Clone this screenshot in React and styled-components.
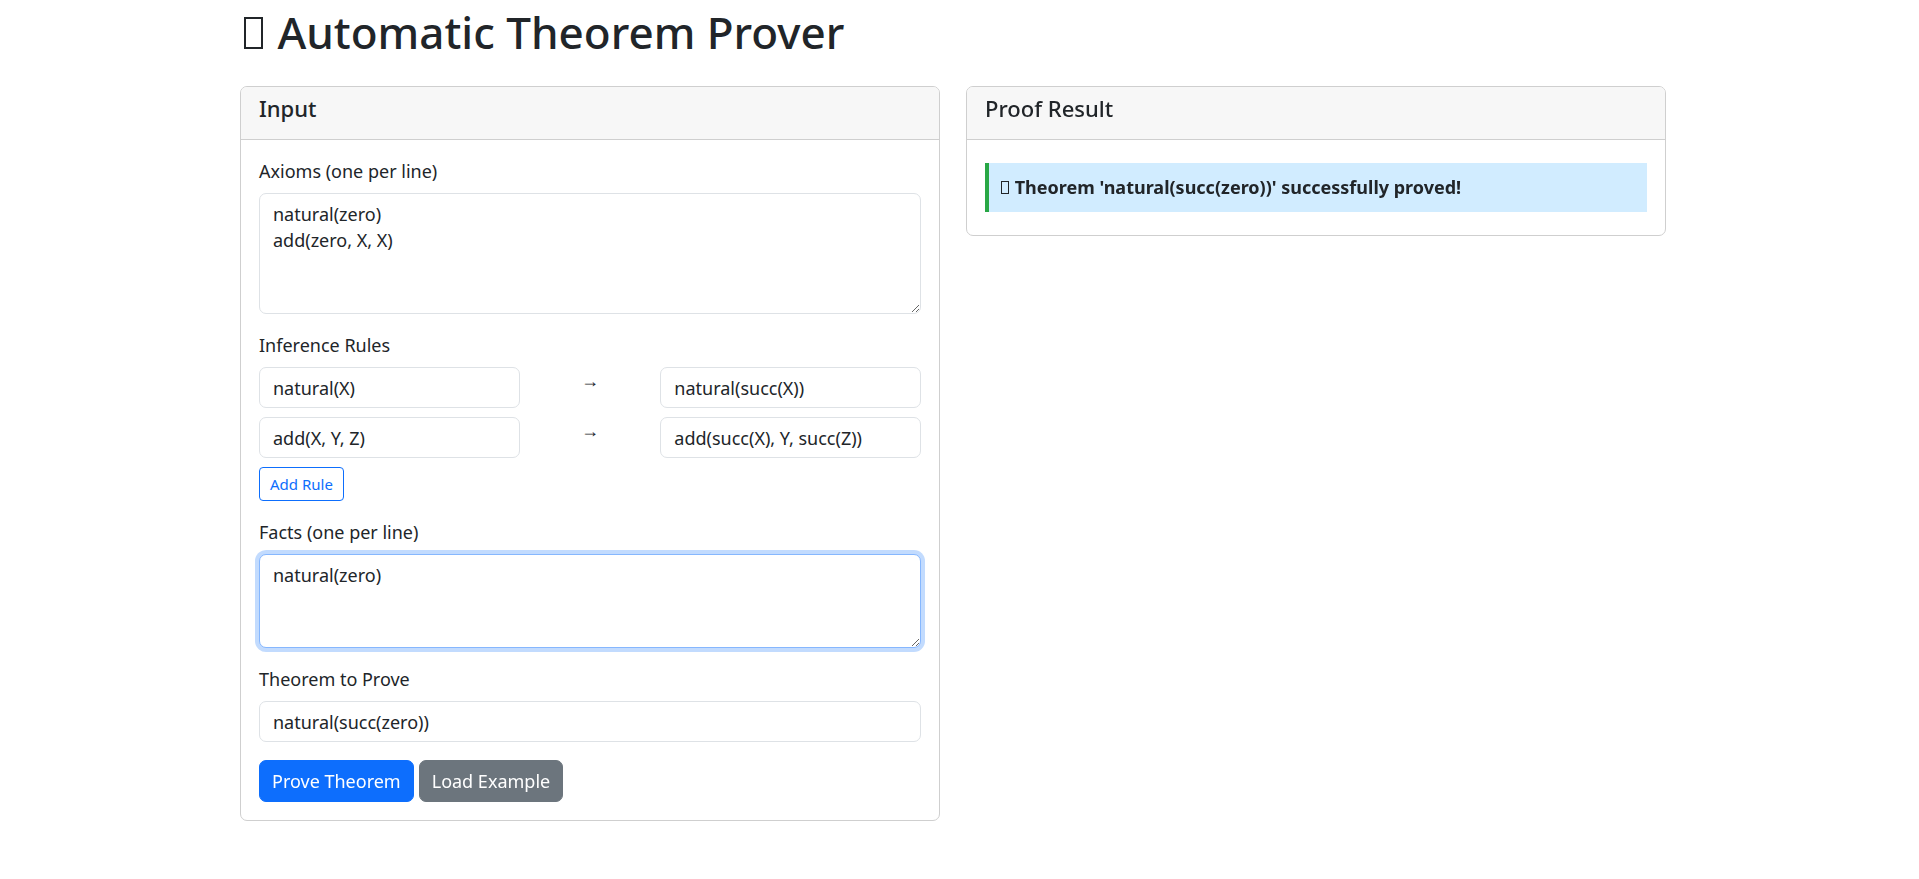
import React, { useEffect, useRef, useState } from "react";
import styled, { createGlobalStyle, css } from "styled-components";

const GlobalStyle = createGlobalStyle`
  *, *::before, *::after { box-sizing: border-box; }
  body {
    margin: 0;
    padding-right: 13px;
    background: #fff;
    color: #212529;
    font-family: "Noto Sans", "Liberation Sans", sans-serif;
    font-size: 18px;
    line-height: 26px;
  }
`;

const Page = styled.main`
  max-width: 1452px;
  margin: 0 auto;
  padding: 6px 13px 52px;
`;

const Title = styled.h1`
  margin: 0 0 27px;
  font-size: 44px;
  font-weight: 500;
  line-height: 53px;
`;

/* Hollow upright box that stands in front of a heading or message. */
const TitleMark = styled.span`
  display: inline-block;
  width: 19px;
  height: 32px;
  margin: 0 3px 0 4px;
  border: 2px solid currentColor;
`;

const ResultMark = styled.span`
  display: inline-block;
  width: 8px;
  height: 13px;
  margin: 0 1px;
  border: 1px solid currentColor;
`;

const Columns = styled.div`
  display: grid;
  grid-template-columns: repeat(2, minmax(0, 1fr));
  gap: 26px;
  align-items: start;

  @media (max-width: 840px) {
    grid-template-columns: minmax(0, 1fr);
  }
`;

const Card = styled.section`
  border: 1px solid #cfcfcf;
  border-radius: 7px;
  background: #fff;
`;

const CardHeader = styled.header`
  padding: 8px 18px 18px;
  border-bottom: 1px solid #cfcfcf;
  border-radius: 6px 6px 0 0;
  background: #f7f7f7;
`;

const CardTitle = styled.h2`
  margin: 0;
  font-size: 22px;
  font-weight: 500;
  line-height: 26px;
`;

const CardBody = styled.div`
  padding: 18px;
`;

const Group = styled.div`
  margin-bottom: 18px;
`;

const labelStyle = css`
  display: block;
  margin-bottom: 9px;
  padding: 0;
`;

const Label = styled.label`
  ${labelStyle}
`;

const RuleSet = styled.fieldset`
  min-width: 0;
  margin: 0 0 18px;
  padding: 0;
  border: 0;
`;

const Legend = styled.legend`
  ${labelStyle}
`;

const fieldStyle = css`
  display: block;
  width: 100%;
  padding: 7px 13px;
  border: 1px solid #dee2e6;
  border-radius: 7px;
  outline: 0;
  background: #fff;
  color: inherit;
  font: inherit;

  &:focus {
    border-color: #86b7fe;
    box-shadow: 0 0 0 4px rgba(13, 110, 253, 0.25);
  }
`;

const Input = styled.input`
  ${fieldStyle}
  height: 41px;
`;

const TextArea = styled.textarea`
  ${fieldStyle}
  height: ${({ $height }) => $height}px;
  resize: vertical;
  caret-color: transparent;
`;

const RuleRow = styled.div`
  display: grid;
  grid-template-columns: repeat(12, minmax(0, 1fr));
  column-gap: 26px;
  margin-bottom: 9px;
`;

const RuleInput = styled(Input)`
  grid-column: span 5;
`;

const Arrow = styled.span`
  grid-column: span 2;
  text-align: center;
`;

const Button = styled.button`
  padding: 7px 12px;
  border: 1px solid ${({ $color }) => $color};
  border-radius: 7px;
  background: ${({ $color }) => $color};
  color: #fff;
  font: inherit;
  cursor: pointer;
`;

const SmallButton = styled.button`
  display: block;
  padding: 4px 10px;
  border: 1px solid #0d6efd;
  border-radius: 4px;
  background: transparent;
  color: #0d6efd;
  font: inherit;
  font-size: 15px;
  line-height: 24px;
  cursor: pointer;
`;

const Actions = styled.div`
  display: flex;
  flex-wrap: wrap;
  gap: 5px;
`;

const Result = styled.p`
  margin: 5px 0;
  padding: 11px 11px 12px;
  border-left: 4px solid #28a745;
  background: #d1ecff;
  font-weight: 700;
`;

const example = {
  axioms: "natural(zero)\nadd(zero, X, X)",
  rules: [
    ["natural(X)", "natural(succ(X))"],
    ["add(X, Y, Z)", "add(succ(X), Y, succ(Z))"],
  ],
  facts: "natural(zero)",
  theorem: "natural(succ(zero))",
};

export default function App() {
  const [form, setForm] = useState(example);
  const factsRef = useRef(null);

  useEffect(() => {
    factsRef.current.focus({ preventScroll: true });
  }, []);

  const update = (key) => (event) => setForm({ ...form, [key]: event.target.value });
  const updateRule = (row, side) => (event) =>
    setForm({
      ...form,
      rules: form.rules.map((rule, i) =>
        i === row ? rule.map((text, j) => (j === side ? event.target.value : text)) : rule
      ),
    });

  return (
    <Page>
      <GlobalStyle />
      <Title>
        <TitleMark aria-hidden="true" /> Automatic Theorem Prover
      </Title>
      <Columns>
        <Card>
          <CardHeader>
            <CardTitle>Input</CardTitle>
          </CardHeader>
          <CardBody>
            <Group>
              <Label htmlFor="axioms">Axioms (one per line)</Label>
              <TextArea id="axioms" $height={121} value={form.axioms} onChange={update("axioms")} />
            </Group>
            <RuleSet>
              <Legend>Inference Rules</Legend>
              {form.rules.map((rule, i) => (
                <RuleRow key={i}>
                  <RuleInput aria-label="Premise" value={rule[0]} onChange={updateRule(i, 0)} />
                  <Arrow>→</Arrow>
                  <RuleInput aria-label="Conclusion" value={rule[1]} onChange={updateRule(i, 1)} />
                </RuleRow>
              ))}
              <SmallButton
                type="button"
                onClick={() => setForm({ ...form, rules: [...form.rules, ["", ""]] })}
              >
                Add Rule
              </SmallButton>
            </RuleSet>
            <Group>
              <Label htmlFor="facts">Facts (one per line)</Label>
              <TextArea
                id="facts"
                ref={factsRef}
                $height={94}
                value={form.facts}
                onChange={update("facts")}
              />
            </Group>
            <Group>
              <Label htmlFor="theorem">Theorem to Prove</Label>
              <Input id="theorem" value={form.theorem} onChange={update("theorem")} />
            </Group>
            <Actions>
              <Button type="button" $color="#0d6efd">Prove Theorem</Button>
              <Button type="button" $color="#6c757d" onClick={() => setForm(example)}>
                Load Example
              </Button>
            </Actions>
          </CardBody>
        </Card>
        <Card>
          <CardHeader>
            <CardTitle>Proof Result</CardTitle>
          </CardHeader>
          <CardBody>
            <Result>
              <ResultMark aria-hidden="true" /> Theorem 'natural(succ(zero))' successfully proved!
            </Result>
          </CardBody>
        </Card>
      </Columns>
    </Page>
  );
}
